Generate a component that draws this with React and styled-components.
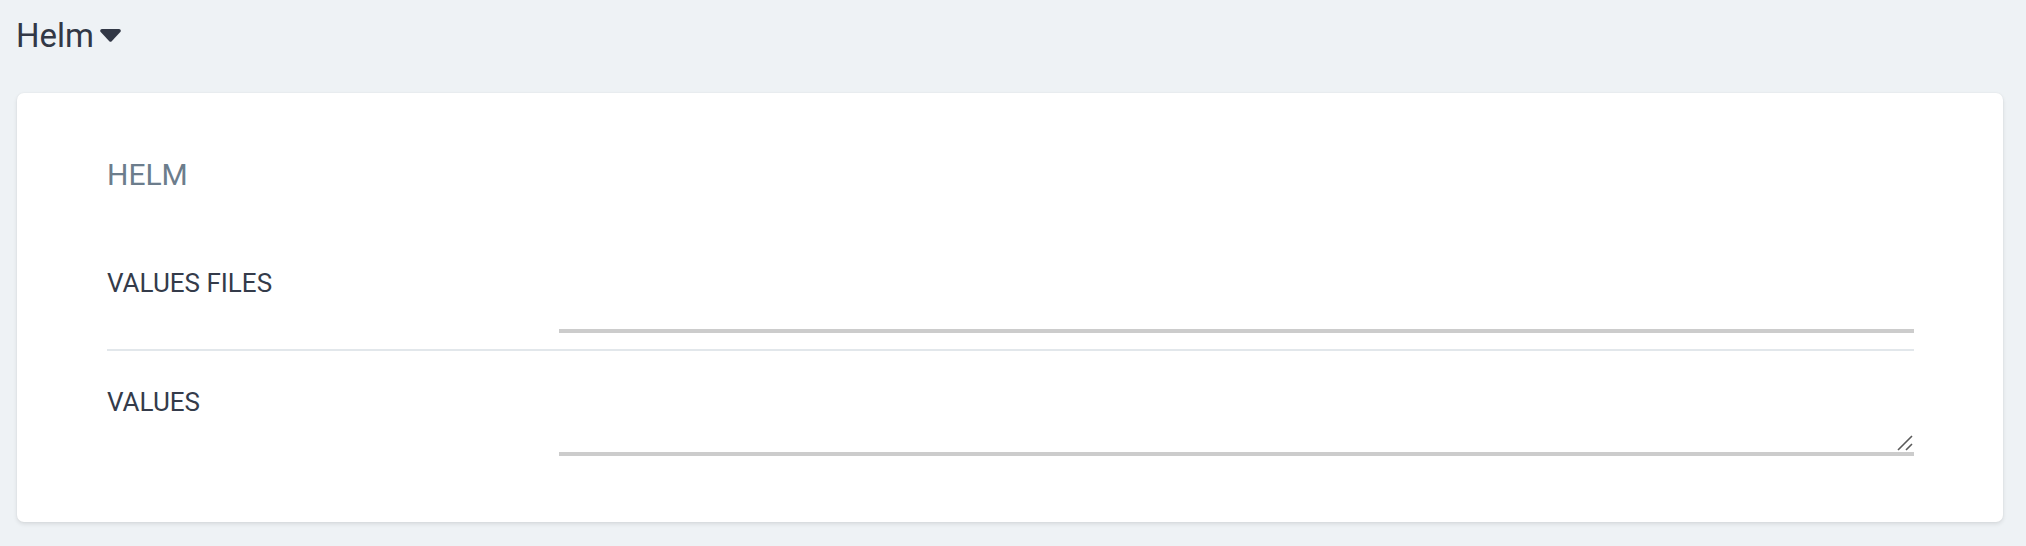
import React from 'react';
import styled, { createGlobalStyle } from 'styled-components';

const GlobalStyle = createGlobalStyle`
   html, body {
      margin: 0;
      padding: 0;
      background: #eef2f5;
      font-family: Roboto, "Liberation Sans", sans-serif;
   }
`;

const Page = styled.div`
   min-height: 546px;
   box-sizing: border-box;
   padding-top: 16px;
`;

const Header = styled.button`
   display: inline-flex;
   align-items: center;
   gap: 6px;
   margin-left: 16px;
   padding: 0;
   border: 0;
   background: none;
   font-family: inherit;
   font-size: 33px;
   line-height: 39px;
   color: #323846;
   cursor: pointer;
   svg {
      margin-top: -1px;
   }
`;

const Card = styled.div`
   margin: 38px 23px 0 17px;
   padding: 64px 89px 66px 90px;
   background: #fff;
   border-radius: 7px;
   box-shadow: 0 2px 4px rgba(0, 0, 0, 0.1), 0 0 2px rgba(0, 0, 0, 0.05);
`;

const SectionTitle = styled.h2`
   margin: 0 0 39px;
   font-size: 30px;
   line-height: 36px;
   font-weight: 400;
   color: #6c7d8c;
`;

const Row = styled.div`
   display: grid;
   grid-template-columns: 25% 75%;
   padding: 35px 0 ${props => (props.last ? '0' : '16px')};
   border-bottom: ${props => (props.last ? 'none' : '2px solid #e2e7eb')};
`;

const Label = styled.label`
   font-size: 26px;
   line-height: 32px;
   color: #343b4a;
   text-transform: uppercase;
`;

const FilesField = styled.div`
   height: 62px;
   border-bottom: 4px solid #cccccc;
`;

const AreaWrap = styled.div`
   position: relative;
`;

const ValuesArea = styled.textarea`
   display: block;
   box-sizing: border-box;
   width: 100%;
   height: 70px;
   margin: 0;
   padding: 0;
   border: 0;
   border-bottom: 4px solid #cccccc;
   background: transparent;
   font-family: inherit;
   font-size: 20px;
   outline: none;
   resize: none;
`;

const Grip = styled.svg`
   position: absolute;
   right: 1px;
   bottom: 5px;
   pointer-events: none;
`;

const Caret = () => (
   <svg width="21" height="13" viewBox="0 0 21 13">
      <path
         d="M2 0H19C20.6 0 21.4 1.9 20.3 3.1L11.7 12.2C11 12.9 10 12.9 9.3 12.2L0.7 3.1C-0.4 1.9 0.4 0 2 0Z"
         fill="#323846"
      />
   </svg>
);

export default function App() {
   return (
      <Page>
         <GlobalStyle />
         <Header>
            Helm
            <Caret />
         </Header>
         <Card>
            <SectionTitle>HELM</SectionTitle>
            <Row>
               <Label>Values Files</Label>
               <FilesField />
            </Row>
            <Row last>
               <Label>Values</Label>
               <AreaWrap>
                  <ValuesArea />
                  <Grip width="16" height="16" viewBox="0 0 16 16">
                     <path d="M1 15L15 1M9 15L15 9" stroke="#5a5a5a" strokeWidth="1.6" />
                  </Grip>
               </AreaWrap>
            </Row>
         </Card>
      </Page>
   );
}
